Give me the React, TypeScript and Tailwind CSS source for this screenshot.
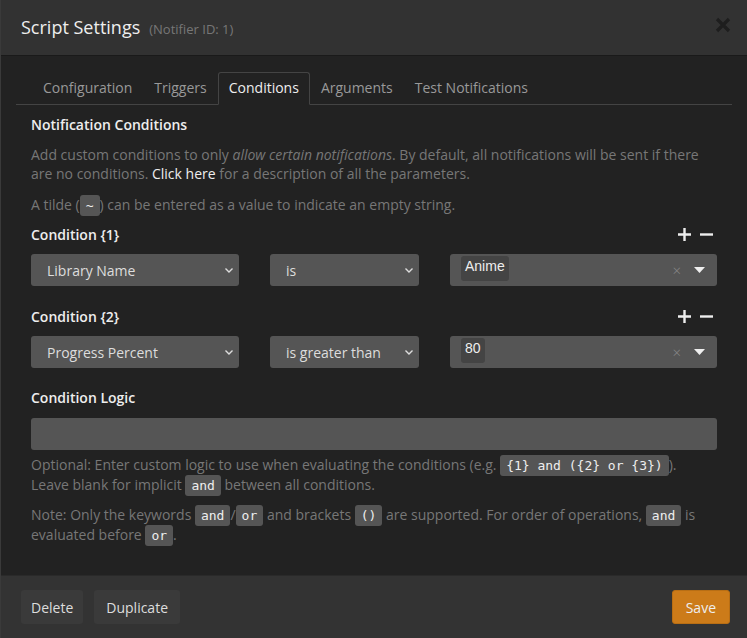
import { useState } from "react";

const font = { fontFamily: '"Open Sans", "DejaVu Sans", sans-serif' };

function Code({ children }: { children: React.ReactNode }) {
  return (
    <code className="rounded-[3px] bg-[#555] px-[6px] py-[3px] font-['DejaVu_Sans_Mono',monospace] text-[13px] leading-none text-[#eee]">
      {children}
    </code>
  );
}

function Chevron() {
  return (
    <svg width="10" height="10" viewBox="0 0 10 10" className="shrink-0">
      <path d="M1.5 3.5 L5 7 L8.5 3.5" fill="none" stroke="#ddd" strokeWidth="1.4" />
    </svg>
  );
}

function Select({ value, className }: { value: string; className: string }) {
  return (
    <div className={`flex h-8 items-center justify-between rounded-[3px] bg-[#555] pl-4 pr-[5px] text-[14px] text-[#ddd] ${className}`}>
      <span>{value}</span>
      <Chevron />
    </div>
  );
}

function ValueBox({ value }: { value: string }) {
  return (
    <div className="flex h-8 flex-1 items-start rounded-[3px] bg-[#555] pl-[11px] pr-[12px]">
      <span className="mt-[2px] h-[25px] rounded-[3px] bg-[#444] px-[4px] font-['Liberation_Sans',sans-serif] text-[14px] leading-[20px] text-[#eee]">
        {value}
      </span>
      <div className="flex-1" />
      <span className="mr-[13px] self-center text-[15px] font-light text-[#888]">×</span>
      <svg width="11" height="6" viewBox="0 0 11 6" className="self-center">
        <path d="M0 0 L11 0 L5.5 6 Z" fill="#eee" />
      </svg>
    </div>
  );
}

function Condition({ n, field, op, value }: { n: number; field: string; op: string; value: string }) {
  return (
    <div>
      <div className="flex h-[20px] items-center justify-between">
        <span className="text-[14px] font-semibold text-[#eee]">Condition {`{${n}}`}</span>
        <div className="flex items-center gap-[9px] pr-[4px]">
          <svg width="13" height="13" viewBox="0 0 13 13">
            <path d="M6.5 0 V13 M0 6.5 H13" stroke="#eee" strokeWidth="2.4" />
          </svg>
          <svg width="13" height="13" viewBox="0 0 13 13">
            <path d="M0 6.5 H13" stroke="#eee" strokeWidth="2.4" />
          </svg>
        </div>
      </div>
      <div className="mt-[10px] flex gap-[31px]">
        <Select value={field} className="w-[208px]" />
        <Select value={op} className="w-[149px]" />
        <ValueBox value={value} />
      </div>
    </div>
  );
}

export default function App() {
  const [tab] = useState("Conditions");
  const tabs = ["Configuration", "Triggers", "Conditions", "Arguments", "Test Notifications"];
  return (
    <div style={font} className="flex h-[638px] w-[747px] flex-col border-l border-[#3a3a3a] bg-[#222]">
      {/* Header */}
      <div className="flex h-[56px] items-center justify-between border-b border-[#1a1a1a] bg-[#323232] pl-[20px] pr-[16px]">
        <div className="flex items-baseline gap-[9px]">
          <span className="text-[18px] text-[#eee]">Script Settings</span>
          <span className="text-[13px] text-[#777]">(Notifier ID: 1)</span>
        </div>
        <svg width="16" height="16" viewBox="0 0 16 16" className="mt-[-6px]">
          <path d="M2 2 L14 14 M14 2 L2 14" stroke="#1e1e1e" strokeWidth="3.2" />
        </svg>
      </div>

      {/* Body */}
      <div className="flex-1 px-[15px] pt-[16px]">
        <div className="flex border-b border-[#444] pl-[16px]">
          {tabs.map((t) => (
            <div
              key={t}
              className={
                t === tab
                  ? "mb-[-1px] rounded-t-[3px] border border-[#444] border-b-[#222] px-[10px] py-[5px] text-[14px] leading-[20px] text-[#eee]"
                  : "border border-transparent px-[10px] py-[5px] text-[14px] leading-[20px] text-[#999]"
              }
            >
              {t}
            </div>
          ))}
        </div>

        <div className="px-[15px] pt-[9px]">
          <div className="text-[14px] font-semibold leading-[22px] text-[#eee]">Notification Conditions</div>
          <p className="mt-[9px] text-[14px] leading-[19px] text-[#777]">
            Add custom conditions to only <em>allow certain notifications</em>. By default, all notifications will be sent if there
            are no conditions. <span className="text-[#eee]">Click here</span> for a description of all the parameters.
          </p>
          <p className="mt-[12px] text-[14px] leading-[19px] text-[#777]">
            A tilde (<Code>~</Code>) can be entered as a value to indicate an empty string.
          </p>

          <div className="mt-[10px]">
            <Condition n={1} field="Library Name" op="is" value="Anime" />
          </div>
          <div className="mt-[20px]">
            <Condition n={2} field="Progress Percent" op="is greater than" value="80" />
          </div>

          <div className="mt-[20px] h-[20px] text-[14px] font-semibold leading-[20px] text-[#eee]">Condition Logic</div>
          <div className="mt-[10px] h-[32px] rounded-[3px] bg-[#555]" />
          <p className="mt-[5px] text-[14px] leading-[20px] text-[#777]">
            Optional: Enter custom logic to use when evaluating the conditions (e.g. <Code>{"{1} and ({2} or {3})"}</Code>).
            <br />
            Leave blank for implicit <Code>and</Code> between all conditions.
          </p>
          <p className="mt-[10px] text-[14px] leading-[20px] text-[#777]">
            Note: Only the keywords <Code>and</Code>/<Code>or</Code> and brackets <Code>()</Code> are supported. For order of operations, <Code>and</Code> is
            evaluated before <Code>or</Code>.
          </p>
        </div>
      </div>

      {/* Footer */}
      <div className="flex h-[63px] items-center justify-between border-t border-[#2a2a2a] bg-[#333] pl-[20px] pr-[17px]">
        <div className="flex gap-[11px]">
          <button className="h-[34px] rounded-[3px] bg-[#3a3a3a] px-[10px] text-[14px] text-[#ddd]">Delete</button>
          <button className="h-[34px] rounded-[3px] bg-[#3a3a3a] px-[12px] text-[14px] text-[#ddd]">Duplicate</button>
        </div>
        <button className="h-[34px] rounded-[3px] border border-[#b86e14] bg-[#cc7b19] px-[13px] text-[14px] text-[#eee]">Save</button>
      </div>
    </div>
  );
}
